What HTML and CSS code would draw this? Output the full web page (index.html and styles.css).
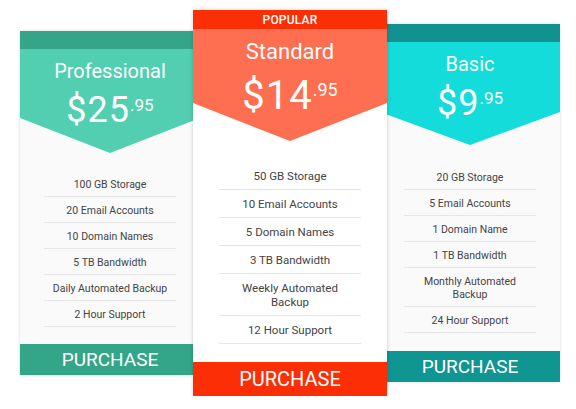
FILE: index.html
```html
<!DOCTYPE html>
<html>
<head>
<meta charset="utf-8">
<link rel="stylesheet" href="styles.css">
</head>
<body>
<div class="pricing">
  <div class="card pro">
    <div class="topbar"></div>
    <div class="head">
      <div class="title">Professional</div>
      <div class="price">$25<span class="cents">.95</span></div>
    </div>
    <ul class="features">
      <li>100 GB Storage</li>
      <li>20 Email Accounts</li>
      <li>10 Domain Names</li>
      <li>5 TB Bandwidth</li>
      <li>Daily Automated Backup</li>
      <li>2 Hour Support</li>
    </ul>
    <div class="buy">PURCHASE</div>
  </div>
  <div class="card std">
    <div class="topbar">POPULAR</div>
    <div class="head">
      <div class="title">Standard</div>
      <div class="price">$14<span class="cents">.95</span></div>
    </div>
    <ul class="features">
      <li>50 GB Storage</li>
      <li>10 Email Accounts</li>
      <li>5 Domain Names</li>
      <li>3 TB Bandwidth</li>
      <li>Weekly Automated Backup</li>
      <li>12 Hour Support</li>
    </ul>
    <div class="buy">PURCHASE</div>
  </div>
  <div class="card basic">
    <div class="topbar"></div>
    <div class="head">
      <div class="title">Basic</div>
      <div class="price">$9<span class="cents">.95</span></div>
    </div>
    <ul class="features">
      <li>20 GB Storage</li>
      <li>5 Email Accounts</li>
      <li>1 Domain Name</li>
      <li>1 TB Bandwidth</li>
      <li>Monthly Automated Backup</li>
      <li>24 Hour Support</li>
    </ul>
    <div class="buy">PURCHASE</div>
  </div>
</div>
</body>
</html>
```
FILE: styles.css
```css
html, body {
  margin: 0;
  padding: 0;
  background: #fff;
}
body {
  font-family: Roboto, "Liberation Sans", sans-serif;
  color: #fff;
}
.pricing {
  display: flex;
  align-items: flex-start;
  padding-left: 20px;
}
.card {
  width: 180px;
  background: #fafafa;
  box-shadow: 0 0 3px rgba(0, 0, 0, 0.16);
  display: flex;
  flex-direction: column;
}
.pro { margin-top: 31px; }
.basic { margin-top: 24px; }
.std {
  width: 194px;
  margin: 10px -7px 0;
  background: #fff;
  position: relative;
  z-index: 1;
  box-shadow: 0 0 4px rgba(0, 0, 0, 0.2);
}
.topbar {
  height: 18px;
}
.std .topbar {
  height: 19px;
  line-height: 20px;
  font-size: 12px;
  font-weight: 500;
  text-align: center;
  letter-spacing: 0.2px;
}
.head {
  text-align: center;
  padding-top: 10px;
  box-sizing: border-box;
}
.pro .head {
  height: 104px;
  clip-path: polygon(0 0, 100% 0, 100% 69px, 50% 100%, 0 69px);
}
.std .head {
  height: 112px;
  clip-path: polygon(0 0, 100% 0, 100% 74px, 50% 100%, 0 74px);
}
.basic .head {
  height: 103px;
  clip-path: polygon(0 0, 100% 0, 100% 70px, 50% 100%, 0 70px);
}
.title {
  font-size: 20px;
  line-height: 24px;
}
.std .title {
  font-size: 22px;
  line-height: 26px;
}
.price {
  font-size: 36px;
  line-height: 40px;
  margin-top: 7px;
  font-weight: 400;
  letter-spacing: 1px;
}
.std .price {
  font-size: 40px;
  line-height: 44px;
  margin-top: 9px;
}
.cents {
  font-size: 17px;
  letter-spacing: 0;
  line-height: 1;
  vertical-align: 11px;
}
.std .cents {
  font-size: 18px;
  vertical-align: 13px;
}
.features {
  list-style: none;
  margin: 0;
  padding: 18px 24px 17px;
  color: #444;
  font-size: 10.5px;
  line-height: 13px;
  text-align: center;
}
.features li {
  padding: 7px 4px 5px;
  border-bottom: 1px solid #e6e6e6;
}
.std .features {
  padding: 21px 26px 18px;
  font-size: 11.5px;
  line-height: 14px;
}
.std .features li {
  padding: 7px 8px 6px;
}
.basic .features {
  padding: 19px 24px 18px;
}
.buy {
  height: 31px;
  line-height: 32px;
  font-size: 19px;
  text-align: center;
}
.std .buy {
  height: 34px;
  line-height: 35px;
  font-size: 20px;
}
.pro .topbar { background: #35a589; }
.pro .head { background: #51cfb0; }
.pro .buy { background: #33a688; }
.std .topbar { background: #fa2f06; }
.std .head { background: #fe6e51; }
.std .buy { background: #fb2e06; }
.basic .topbar { background: #119291; }
.basic .head { background: #13dcdb; }
.basic .buy { background: #0f9592; }
```
